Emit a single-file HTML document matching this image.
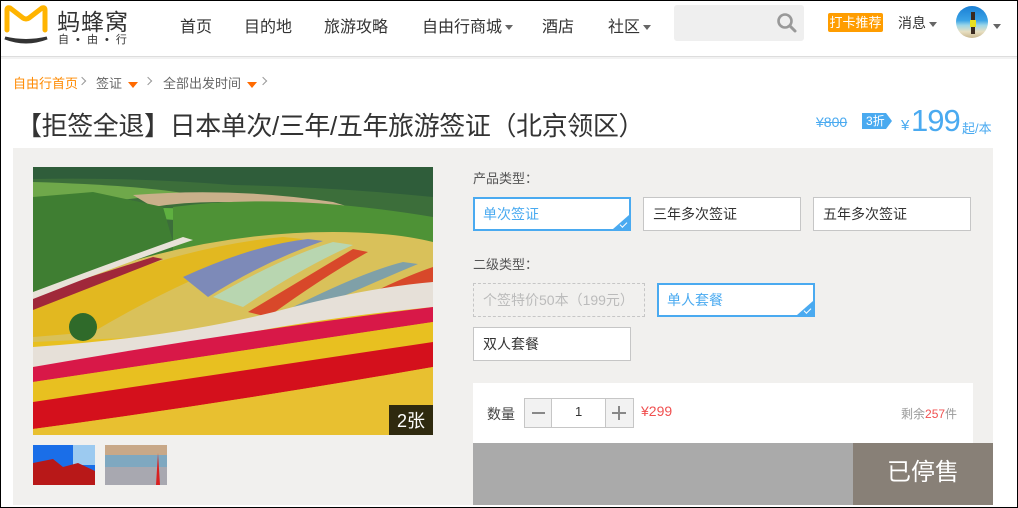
<!DOCTYPE html>
<html><head><meta charset="utf-8">
<style>
*{margin:0;padding:0;box-sizing:border-box}
body{width:1018px;height:508px;overflow:hidden;background:#fff;font-family:"Liberation Sans","Noto Sans CJK SC",sans-serif;position:relative}
.frame{position:absolute;left:0;top:0;width:1018px;height:508px;border:1px solid #000;pointer-events:none;z-index:9}
.abs{position:absolute}
.nav{font-size:16px;color:#333;top:13px}
.caret{display:inline-block;width:0;height:0;border-left:4px solid transparent;border-right:4px solid transparent;border-top:5px solid #666;vertical-align:middle;margin-left:3px}
.ocaret{display:inline-block;width:0;height:0;border-left:5px solid transparent;border-right:5px solid transparent;border-top:6px solid #ff6a00;vertical-align:middle;margin-left:6px}
.bc{top:73px;font-size:13px;color:#666}
.chev{position:absolute;top:78px;width:6px;height:6px;border-right:1px solid #999;border-top:1px solid #999;transform:rotate(45deg)}
.opt{position:absolute;height:34px;border:1px solid #c6c6c6;background:#fff;font-size:14px;color:#333;line-height:32px;padding-left:9px}
.sel{border:2px solid #4aaaf0;color:#4aaaf0;line-height:30px;padding-left:8px}
.sel:after{content:"";position:absolute;right:0;bottom:0;width:0;height:0;border-left:16px solid transparent;border-bottom:14px solid #4aaaf0}
.sel i{position:absolute;right:2px;bottom:3px;width:7px;height:4px;border-left:1.5px solid #fff;border-bottom:1.5px solid #fff;transform:rotate(-45deg);z-index:2}
.lbl{position:absolute;font-size:13px;color:#555}
</style></head><body>
<div class="frame"></div>
<svg class="abs" style="left:3px;top:4px" width="46" height="42" viewBox="0 0 46 42">
<path d="M4 26 V6 Q4 3 7 4 L20 14 Q23 16 26 14 L39 4 Q42 3 42 6 V26" fill="none" stroke="#ffb400" stroke-width="5" stroke-linejoin="round" stroke-linecap="round"/>
<path d="M2 34 Q23 42 44 34 Q23 39 2 34Z" fill="#333" stroke="#333" stroke-width="3"/>
</svg>
<div class="abs" style="left:57px;top:3px;font-size:23px;color:#333;letter-spacing:1px">蚂蜂窝</div>
<div class="abs" style="left:58px;top:31px;font-size:11px;color:#333;letter-spacing:2px">自 • 由 • 行</div>
<div class="abs nav" style="left:180px">首页</div>
<div class="abs nav" style="left:244px">目的地</div>
<div class="abs nav" style="left:324px">旅游攻略</div>
<div class="abs nav" style="left:422px">自由行商城<span class="caret"></span></div>
<div class="abs nav" style="left:542px">酒店</div>
<div class="abs nav" style="left:608px">社区<span class="caret"></span></div>
<div class="abs" style="left:674px;top:5px;width:130px;height:36px;background:#efefef;border-radius:3px"></div>
<svg class="abs" style="left:776px;top:12px" width="22" height="22" viewBox="0 0 22 22"><circle cx="9" cy="9" r="6.5" fill="none" stroke="#999" stroke-width="2.6"/><path d="M14 14 L19 19" stroke="#999" stroke-width="3" stroke-linecap="round"/></svg>
<div class="abs" style="left:828px;top:13px;width:55px;height:19px;background:#ff9d00;border-radius:2px;color:#fff;font-size:13px;line-height:19px;text-align:center">打卡推荐</div>
<div class="abs" style="left:898px;top:13px;font-size:14px;color:#333">消息<span class="caret"></span></div>
<div class="abs" style="left:956px;top:6px;width:32px;height:32px;border-radius:50%;background:linear-gradient(#1a7fd4 0%,#3aa3e6 45%,#9ad6e8 60%,#e8dfc2 80%,#c9b890);overflow:hidden"><div style="position:absolute;left:15px;top:6px;width:4px;height:22px;background:#3a2a20"></div><div style="position:absolute;left:14px;top:14px;width:6px;height:7px;background:#e8e020"></div></div>
<div class="abs" style="left:993px;top:18px"><span class="caret" style="margin:0"></span></div>
<div class="abs" style="left:0;top:56px;width:1018px;height:1px;background:#ddd"></div>
<div class="abs" style="left:0;top:57px;width:1018px;height:2px;background:#f2f2f2"></div>
<div class="abs bc" style="left:13px;color:#ff8a00">自由行首页</div>
<div class="chev" style="left:79px"></div>
<div class="abs bc" style="left:96px">签证<span class="ocaret"></span></div>
<div class="chev" style="left:145px"></div>
<div class="abs bc" style="left:163px">全部出发时间<span class="ocaret"></span></div>
<div class="chev" style="left:260px"></div>
<div class="abs" style="left:16px;top:106px;font-size:26px;color:#333;letter-spacing:-0.4px">【拒签全退】日本单次/三年/五年旅游签证（北京领区）</div>
<div class="abs" style="left:816px;top:114px;font-size:14px;color:#4aaaf0;text-decoration:line-through">¥800</div>
<div class="abs" style="left:862px;top:113px;width:30px;height:16px;background:#4aaaf0;color:#fff;font-size:12px;line-height:16px;padding-left:4px;clip-path:polygon(0 0,80% 0,100% 50%,80% 100%,0 100%)">3折</div>
<div class="abs" style="left:901px;top:117px;font-size:15px;color:#4aaaf0">¥</div>
<div class="abs" style="left:911px;top:103px;font-size:31px;color:#4aaaf0;letter-spacing:-1px">199</div>
<div class="abs" style="left:962px;top:118px;font-size:13px;color:#4aaaf0">起/本</div>
<div class="abs" style="left:13px;top:148px;width:980px;height:357px;background:#f1f0ee"></div>
<svg class="abs" style="left:33px;top:167px" width="400" height="268" viewBox="0 0 400 268">
<rect width="400" height="268" fill="#e8c020"/>
<rect width="400" height="90" fill="#3c6e3a"/>
<path d="M0 0 H400 V30 Q300 20 200 18 Q100 10 0 12Z" fill="#2f5d3a"/>
<path d="M0 15 Q100 18 150 26 L60 36 L0 30Z" fill="#6fa84a"/>
<path d="M100 28 Q200 20 300 35 L350 50 L260 40 Q180 30 120 40Z" fill="#c9b08a"/>
<path d="M80 40 L180 42 L170 55 L100 50Z" fill="#5fb040"/>
<path d="M0 30 L60 25 L130 40 L140 75 L140 120 L0 130Z" fill="#3f7e32"/>
<path d="M140 40 Q250 25 400 50 V75 Q300 60 200 75 L140 90Z" fill="#4e9236"/>
<path d="M0 130 Q150 65 300 65 Q360 65 400 75 V115 Q340 130 300 140 Q250 155 160 168 L0 175Z" fill="#d9c15a"/>
<path d="M0 140 Q140 80 250 70 L270 72 Q170 100 60 165 L0 170Z" fill="#e2b820"/>
<path d="M0 128 L120 90 L130 92 L0 143Z" fill="#a0283a"/>
<path d="M150 110 Q220 78 275 72 L290 74 Q230 95 175 130Z" fill="#7d8ab8"/>
<path d="M180 130 Q250 90 300 75 L320 78 Q270 100 210 140Z" fill="#b8d6b0"/>
<path d="M215 145 Q290 100 320 82 L335 85 Q290 110 235 150Z" fill="#d8482a"/>
<path d="M260 140 Q330 105 370 95 L385 97 Q330 120 275 145Z" fill="#7fa0a8"/>
<path d="M320 135 Q370 110 400 100 V115 Q360 125 335 140Z" fill="#d8482a"/>
<path d="M0 125 Q80 95 150 70 L160 73 Q80 100 0 132Z" fill="#e8e2d8"/>
<path d="M0 180 Q150 170 260 140 Q340 120 400 115 V140 Q250 155 150 180 Q60 195 0 200Z" fill="#e6e0d8"/>
<ellipse cx="50" cy="160" rx="14" ry="14" fill="#2f6a2a"/>
<path d="M0 200 Q200 165 400 140 V155 Q200 185 0 215Z" fill="#d81848"/>
<path d="M0 215 Q200 185 400 155 V175 Q200 205 0 235Z" fill="#e8c020"/>
<path d="M0 235 Q200 205 400 175 V200 Q200 235 0 262Z" fill="#d4101c"/>
<path d="M0 262 Q200 235 400 200 V268 H0Z" fill="#e8c030"/>
<rect x="356" y="238" width="44" height="30" fill="rgba(20,20,10,.88)"/>
<text x="364" y="260" font-size="18" fill="#fff" font-family="Liberation Sans,Noto Sans CJK SC,sans-serif">2张</text>
</svg>
<svg class="abs" style="left:33px;top:445px" width="62" height="40" viewBox="0 0 62 40"><rect width="62" height="40" fill="#1a6ee8"/><rect x="40" width="22" height="20" fill="#9ccaf0"/><path d="M0 18 L20 14 L30 22 L45 18 L62 26 V40 H0Z" fill="#b81818"/></svg>
<svg class="abs" style="left:105px;top:445px" width="62" height="40" viewBox="0 0 62 40"><rect width="62" height="40" fill="#7fa8c0"/><rect width="62" height="10" fill="#c8a888"/><rect y="22" width="62" height="18" fill="#a8a8b0"/><path d="M53 8 L55 40 L51 40Z" fill="#d82020"/></svg>
<div class="lbl" style="left:473px;top:168px">产品类型：</div>
<div class="opt sel" style="left:473px;top:197px;width:158px">单次签证<i></i></div>
<div class="opt" style="left:643px;top:197px;width:158px">三年多次签证</div>
<div class="opt" style="left:813px;top:197px;width:158px">五年多次签证</div>
<div class="lbl" style="left:473px;top:254px">二级类型：</div>
<div class="opt" style="left:473px;top:283px;width:172px;border:1px dashed #c6c6c6;background:transparent;color:#bbb">个签特价50本（199元）</div>
<div class="opt sel" style="left:657px;top:283px;width:158px">单人套餐<i></i></div>
<div class="opt" style="left:473px;top:327px;width:158px">双人套餐</div>
<div class="abs" style="left:473px;top:383px;width:500px;height:60px;background:#fff"></div>
<div class="abs" style="left:487px;top:404px;font-size:14px;color:#444">数量</div>
<div class="abs" style="left:524px;top:398px;width:110px;height:30px;border:1px solid #c6c6c6;background:#fff"></div>
<div class="abs" style="left:525px;top:399px;width:27px;height:28px;background:#f2f2f2;border-right:1px solid #c6c6c6"></div>
<div class="abs" style="left:532px;top:412px;width:13px;height:2px;background:#888"></div>
<div class="abs" style="left:605px;top:399px;width:28px;height:28px;background:#f2f2f2;border-left:1px solid #c6c6c6"></div>
<div class="abs" style="left:612px;top:412px;width:14px;height:2px;background:#888"></div>
<div class="abs" style="left:618px;top:406px;width:2px;height:14px;background:#888"></div>
<div class="abs" style="left:575px;top:404px;font-size:13px;color:#333">1</div>
<div class="abs" style="left:641px;top:403px;font-size:14px;color:#f05050">¥299</div>
<div class="abs" style="left:901px;top:405px;font-size:12px;color:#999">剩余<span style="color:#f05050">257</span>件</div>
<div class="abs" style="left:473px;top:443px;width:380px;height:62px;background:#aaa"></div>
<div class="abs" style="left:853px;top:443px;width:140px;height:62px;background:#888077;color:#fff;font-size:24px;text-align:center;line-height:60px">已停售</div>
</body></html>
